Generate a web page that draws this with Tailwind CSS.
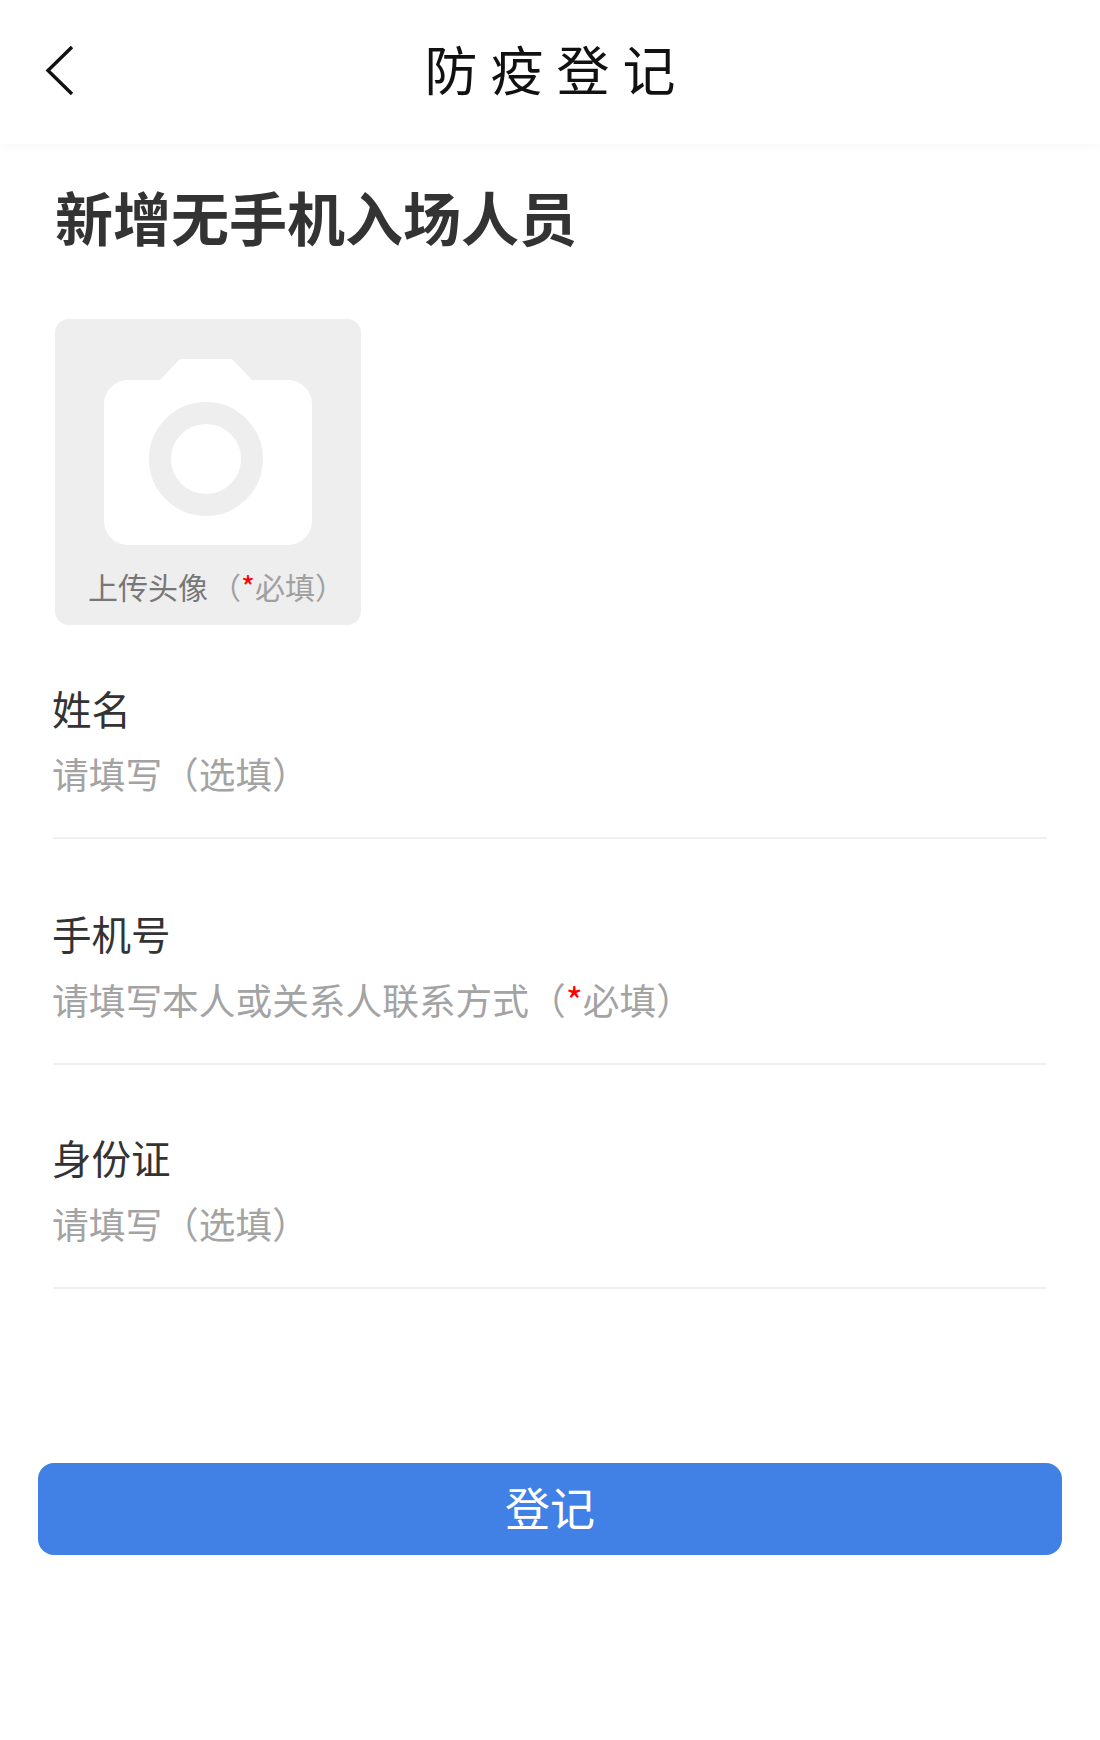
<!DOCTYPE html>
<html lang="zh-CN">
<head>
  <meta charset="UTF-8">
  <meta name="viewport" content="width=device-width, initial-scale=1.0" />
  <script src="https://cdn.jsdelivr.net/npm/@tailwindcss/browser@4"></script>
  <title>防疫登记</title>
</head>
<body class="bg-white font-['Noto_Sans_CJK_SC','Noto_Sans',sans-serif]">
<div class="w-[1100px] h-[1740px] overflow-hidden">
  <header class="h-[144px] grid grid-cols-[120px_1fr_120px] items-center shadow-[0_2px_10px_rgba(0,0,0,0.04)]">
    <div class="pl-[45px] pb-[3px]">
      <svg width="29" height="51" viewBox="0 0 29 51" fill="none" stroke="#111" stroke-width="3.400"><path d="M27 2 3 25.500 27 49"/></svg>
    </div>
    <h1 class="text-center text-[53px] leading-none tracking-[13px] pl-[13px] pb-[8px] text-[#111] font-normal">防疫登记</h1>
  </header>

  <main class="px-[53px]">
    <h2 class="mt-[41px] ml-[2px] text-[58px] leading-[62px] font-bold text-[#333]">新增无手机入场人员</h2>

    <div class="mt-[72px] ml-[2px] w-[306px] h-[306px] rounded-[14px] bg-[#eeeeee] flex flex-col items-center pt-[40px]">
      <svg width="208" height="186" viewBox="0 0 208 186">
        <path fill="#fff" d="M76 0h52l20 21h36a24 24 0 0 1 24 24v117a24 24 0 0 1-24 24H24a24 24 0 0 1-24-24V45a24 24 0 0 1 24-24h32z"/>
        <circle cx="102" cy="100" r="46" fill="#fff" stroke="#eeeeee" stroke-width="22"/>
      </svg>
      <p class="mt-[21px] ml-[17px] text-[30px] leading-[40px] text-[#777] whitespace-nowrap">上传头像<span class="ml-[3px] text-[#a0a0a0]">（<span class="text-[#f00]">*</span>必填）</span></p>
    </div>

    <section class="mt-[60px] h-[154px] border-b-2 border-[#f0f0f0]">
      <p class="-ml-[1px] text-[39.500px] leading-[46px] text-[#333]">姓名</p>
      <p class="-ml-[1px] mt-[16px] text-[36.700px] leading-[52px] text-[#a3a3a3]">请填写（选填）</p>
    </section>
    <section class="mt-[71px] h-[155px] border-b-2 border-[#f0f0f0]">
      <p class="-ml-[1px] text-[39.500px] leading-[46px] text-[#333]">手机号</p>
      <p class="-ml-[1px] mt-[17px] text-[36.700px] leading-[52px] text-[#a3a3a3]">请填写本人或关系人联系方式（<span class="text-[#f00]">*</span>必填）</p>
    </section>
    <section class="mt-[69px] h-[155px] border-b-2 border-[#f0f0f0]">
      <p class="-ml-[1px] text-[39.500px] leading-[46px] text-[#333]">身份证</p>
      <p class="-ml-[1px] mt-[17px] text-[36.700px] leading-[52px] text-[#a3a3a3]">请填写（选填）</p>
    </section>
  </main>

  <div class="px-[38px] mt-[174px]">
    <button class="w-full h-[92px] pb-[6px] rounded-[16px] bg-[#4181e6] text-white text-[45px] leading-none">登记</button>
  </div>
</div>
</body>
</html>
